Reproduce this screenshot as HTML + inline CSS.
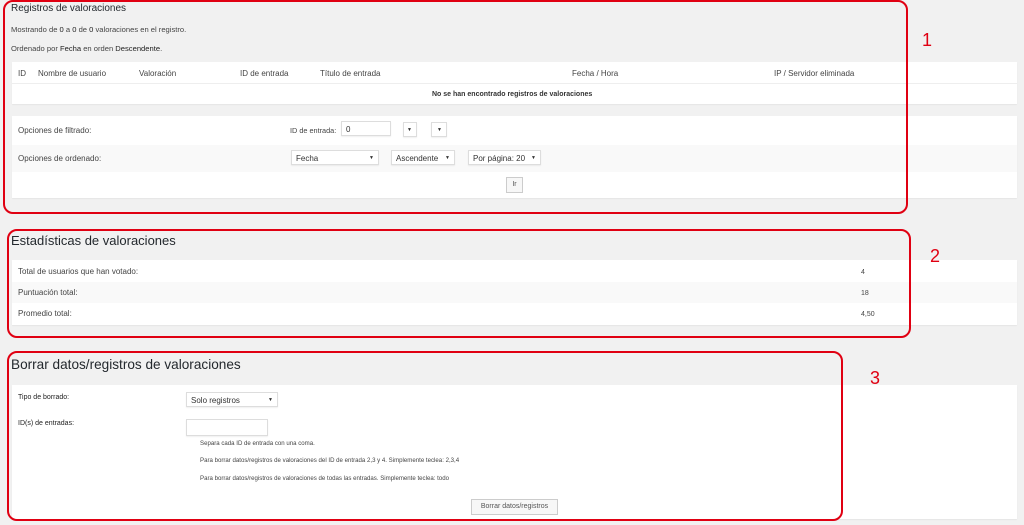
<!DOCTYPE html>
<html><head><meta charset="utf-8"><style>
*{margin:0;padding:0;box-sizing:border-box}
body{width:1024px;height:525px;background:#f1f1f1;font-family:"Liberation Sans",sans-serif;font-size:8px;color:#444;position:relative;overflow:hidden}
.a{position:absolute;white-space:nowrap}
.w{position:absolute;background:#fff;left:12px;width:1005px}
.g{position:absolute;background:#f9f9f9;left:12px;width:1005px}
.red{position:absolute;border:2px solid #e00012;border-radius:10px}
.num{position:absolute;color:#e00012;font-size:18px}
.sel{position:absolute;background:#fff;border:1px solid #ddd;box-shadow:0 1px 1px rgba(0,0,0,.06);font-size:8px;color:#333;padding:3px 4px;height:15px}
.sel:after{content:"▼";position:absolute;right:4px;top:4px;font-size:5px}
.nosel:after{content:none}
.btn{position:absolute;background:#f7f7f7;border:1px solid #ccc;font-size:7px;color:#555;text-align:center;line-height:14px;height:16px}
b{color:#222;font-weight:normal}
</style></head><body>
<div class="a" style="left:11px;top:3px;font-size:10px;color:#23282d">Registros de valoraciones</div>
<div class="a" style="left:11px;top:25px;font-size:7.6px">Mostrando de <b>0</b> a <b>0</b> de <b>0</b> valoraciones en el registro.</div>
<div class="a" style="left:11px;top:44px;font-size:7.6px">Ordenado por <b>Fecha</b> en orden <b>Descendente</b>.</div>
<div class="w" style="top:62px;height:42px;box-shadow:0 1px 1px rgba(0,0,0,.05)"></div>
<div class="w" style="top:83px;height:1px;background:#eee"></div>
<div class="a" style="left:18px;top:69px">ID</div>
<div class="a" style="left:38px;top:69px">Nombre de usuario</div>
<div class="a" style="left:139px;top:69px">Valoración</div>
<div class="a" style="left:240px;top:69px">ID de entrada</div>
<div class="a" style="left:320px;top:69px">Título de entrada</div>
<div class="a" style="left:572px;top:69px">Fecha / Hora</div>
<div class="a" style="left:774px;top:69px">IP / Servidor eliminada</div>
<div class="a" style="left:432px;top:91px;font-size:7px;font-weight:bold;color:#333">No se han encontrado registros de valoraciones</div>
<div class="w" style="top:116px;height:82px;box-shadow:0 1px 1px rgba(0,0,0,.05)"></div>
<div class="g" style="top:145px;height:27px"></div>
<div class="a" style="left:18px;top:126px">Opciones de filtrado:</div>
<div class="a" style="left:290px;top:126px;font-size:7.3px">ID de entrada:</div>
<div class="sel nosel" style="left:341px;top:121px;width:50px">0</div>
<div class="sel" style="left:403px;top:122px;width:14px"></div>
<div class="sel" style="left:431px;top:122px;width:16px"></div>
<div class="a" style="left:18px;top:154px">Opciones de ordenado:</div>
<div class="sel" style="left:291px;top:150px;width:88px">Fecha</div>
<div class="sel" style="left:391px;top:150px;width:64px">Ascendente</div>
<div class="sel" style="left:468px;top:150px;width:73px">Por página: 20</div>
<div class="btn" style="left:506px;top:177px;width:17px">Ir</div>

<div class="a" style="left:11px;top:233px;font-size:13px;color:#23282d">Estadísticas de valoraciones</div>
<div class="w" style="top:260px;height:65px;box-shadow:0 1px 1px rgba(0,0,0,.05)"></div>
<div class="g" style="top:282px;height:21px"></div>
<div class="a" style="left:18px;top:267px">Total de usuarios que han votado:</div>
<div class="a" style="left:861px;top:269px;font-size:7px">4</div>
<div class="a" style="left:18px;top:288px">Puntuación total:</div>
<div class="a" style="left:861px;top:290px;font-size:7px">18</div>
<div class="a" style="left:18px;top:309px">Promedio total:</div>
<div class="a" style="left:861px;top:311px;font-size:7px">4,50</div>

<div class="a" style="left:11px;top:357px;font-size:13.6px;color:#23282d">Borrar datos/registros de valoraciones</div>
<div class="w" style="top:385px;height:134px;box-shadow:0 1px 1px rgba(0,0,0,.05)"></div>
<div class="a" style="left:18px;top:394px;font-size:7px;color:#222">Tipo de borrado:</div>
<div class="sel" style="left:186px;top:392px;width:92px">Solo registros</div>
<div class="a" style="left:18px;top:420px;font-size:7px;color:#222">ID(s) de entradas:</div>
<div class="sel nosel" style="left:186px;top:419px;width:82px;height:17px"></div>
<div class="a" style="left:200px;top:440px;font-size:6.1px">Separa cada ID de entrada con una coma.</div>
<div class="a" style="left:200px;top:457px;font-size:6.1px">Para borrar datos/registros de valoraciones del ID de entrada 2,3 y 4. Simplemente teclea: 2,3,4</div>
<div class="a" style="left:200px;top:475px;font-size:6.1px">Para borrar datos/registros de valoraciones de todas las entradas. Simplemente teclea: todo</div>
<div class="btn" style="left:471px;top:499px;width:87px">Borrar datos/registros</div>

<div class="red" style="left:3px;top:0px;width:905px;height:214px"></div>
<div class="num" style="left:922px;top:30px">1</div>
<div class="red" style="left:7px;top:229px;width:904px;height:109px"></div>
<div class="num" style="left:930px;top:246px">2</div>
<div class="red" style="left:7px;top:351px;width:836px;height:170px"></div>
<div class="num" style="left:870px;top:368px">3</div>
</body></html>
